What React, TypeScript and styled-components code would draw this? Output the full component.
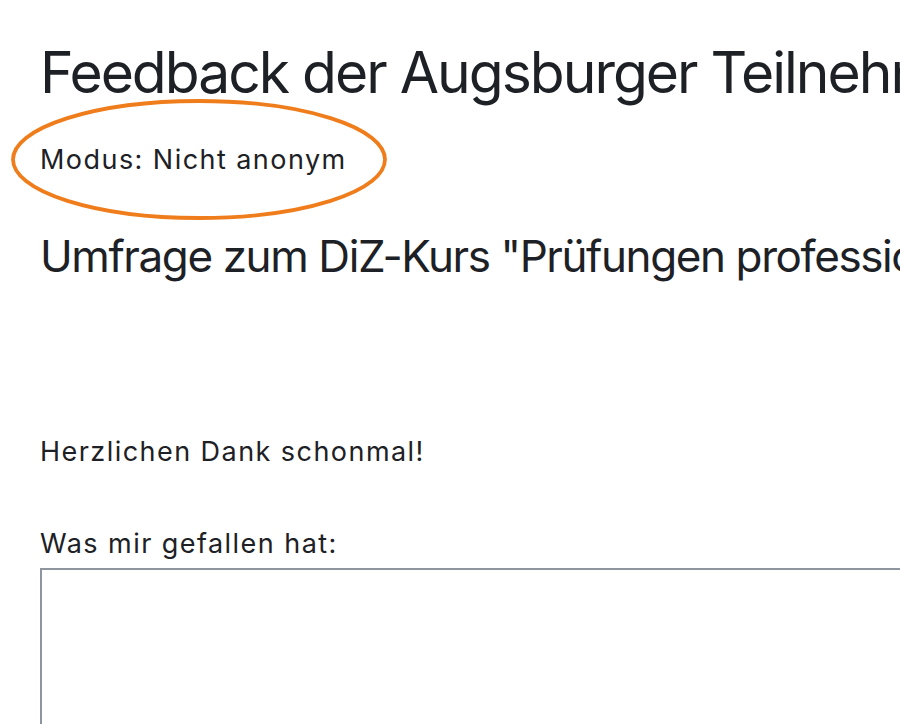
import React from "react";
import styled, { createGlobalStyle } from "styled-components";

const Global = createGlobalStyle`
  html, body { margin: 0; padding: 0; background: #fff; }
  body { font-family: Inter, "Noto Sans", sans-serif; color: #1d2125; overflow: hidden; }
`;

const Page = styled.div`
  position: relative;
  width: 900px;
  height: 724px;
  overflow: hidden;
  padding: 0 0 0 40px;
  box-sizing: border-box;
  white-space: nowrap;
`;

const Title = styled.h2`
  margin: 0;
  padding-top: 39px;
  font-size: 57px;
  font-weight: 400;
  line-height: 68px;
  letter-spacing: -2px;
`;

const BodyText = styled.div`
  font-size: 27px;
  line-height: 36px;
  letter-spacing: 1.45px;
`;

const Mode = styled(BodyText)`
  margin-top: 34.5px;
`;

const Heading = styled.h3`
  margin: 52.2px 0 0;
  font-size: 44px;
  font-weight: 400;
  line-height: 52px;
  letter-spacing: -1.4px;
`;

const Paragraph = styled(BodyText).attrs({ as: "p" })`
  margin: 0;
  padding-top: 152.8px;
`;

const Label = styled(BodyText).attrs({ as: "label" })`
  display: block;
  margin-top: 56px;
`;

const TextArea = styled.textarea`
  display: block;
  margin-top: 6px;
  width: 900px;
  height: 200px;
  border: 2px solid #8f959e;
  border-radius: 0;
  box-sizing: border-box;
  resize: none;
  outline: none;
  background: #fff;
`;

const Annotation = styled.svg`
  position: absolute;
  left: 0;
  top: 90px;
  width: 410px;
  height: 140px;
  pointer-events: none;
`;

export default function App() {
  return (
    <>
      <Global />
      <Page>
        <Title>Feedback der Augsburger Teilnehmer</Title>
        <Mode>Modus: Nicht anonym</Mode>
        <Heading>Umfrage zum DiZ-Kurs "Prüfungen professionell gestalten"</Heading>
        <Paragraph>Herzlichen Dank schonmal!</Paragraph>
        <Label htmlFor="liked">Was mir gefallen hat:</Label>
        <TextArea id="liked" />
        <Annotation viewBox="0 90 410 140">
          <ellipse cx="199" cy="159.5" rx="186" ry="58.5" fill="none" stroke="#ef7d1c" strokeWidth="3.8" />
        </Annotation>
      </Page>
    </>
  );
}
